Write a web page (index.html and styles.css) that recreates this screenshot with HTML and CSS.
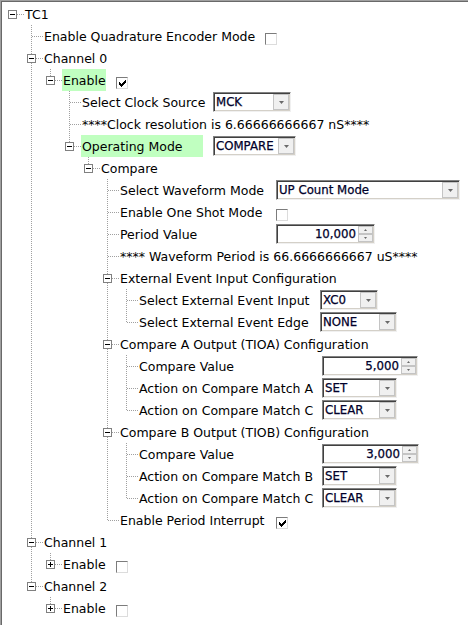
FILE: index.html
```html
<!DOCTYPE html>
<html>
<head>
<meta charset="utf-8">
<link rel="stylesheet" href="styles.css">
</head>
<body>
<div class="tree">
  <div class="row"><span class="o root"><span class="box minus"></span></span><span class="lbl">TC1</span></div>
  <div class="row"><span class="g"></span><span class="o tee"></span><span class="lbl wq">Enable Quadrature Encoder Mode</span><span class="cb"></span></div>
  <div class="row"><span class="g"></span><span class="o tee"><span class="box minus"></span></span><span class="lbl">Channel 0</span></div>
  <div class="row"><span class="g"></span><span class="g v"></span><span class="o elbow"><span class="box minus"></span></span><span class="lbl we hl">Enable</span><span class="cb"><svg class="chk" width="7" height="7" viewBox="0 0 7 7"><path d="M6 0h1v1h-1z M5 1h2v1h-2z M0 2h1v1h-1z M4 2h3v1h-3z M0 3h2v1h-2z M3 3h3v1h-3z M0 4h5v1h-5z M1 5h3v1h-3z M2 6h1v1h-1z"/></svg></span></div>
  <div class="row"><span class="g"></span><span class="g v"></span><span class="g"></span><span class="o tee"></span><span class="lbl w3">Select Clock Source</span><span class="cmb c-mck"><span class="val">MCK</span><span class="btn"><svg width="5" height="3" viewBox="0 0 5 3"><path d="M0 0h5l-2.5 3z"/></svg></span></span></div>
  <div class="row"><span class="g"></span><span class="g v"></span><span class="g"></span><span class="o tee"></span><span class="lbl">****Clock resolution is 6.66666666667 nS****</span></div>
  <div class="row"><span class="g"></span><span class="g v"></span><span class="g"></span><span class="o elbow"><span class="box minus"></span></span><span class="lbl w3 hl">Operating Mode</span><span class="cmb c-cmp"><span class="val">COMPARE</span><span class="btn"><svg width="5" height="3" viewBox="0 0 5 3"><path d="M0 0h5l-2.5 3z"/></svg></span></span></div>
  <div class="row"><span class="g"></span><span class="g v"></span><span class="g"></span><span class="g"></span><span class="o elbow"><span class="box minus"></span></span><span class="lbl">Compare</span></div>
  <div class="row"><span class="g"></span><span class="g v"></span><span class="g"></span><span class="g"></span><span class="g"></span><span class="o tee"></span><span class="lbl w5">Select Waveform Mode</span><span class="cmb c-wave"><span class="val">UP Count Mode</span><span class="btn"><svg width="5" height="3" viewBox="0 0 5 3"><path d="M0 0h5l-2.5 3z"/></svg></span></span></div>
  <div class="row"><span class="g"></span><span class="g v"></span><span class="g"></span><span class="g"></span><span class="g"></span><span class="o tee"></span><span class="lbl w5">Enable One Shot Mode</span><span class="cb"></span></div>
  <div class="row"><span class="g"></span><span class="g v"></span><span class="g"></span><span class="g"></span><span class="g"></span><span class="o tee"></span><span class="lbl w5">Period Value</span><span class="spn s-per"><span class="val">10,000</span><span class="spin"><span><svg width="3" height="2" viewBox="0 0 3 2"><path d="M1.5 0l1.5 2h-3z"/></svg></span><span><svg width="3" height="2" viewBox="0 0 3 2"><path d="M0 0h3l-1.5 2z"/></svg></span></span></span></div>
  <div class="row"><span class="g"></span><span class="g v"></span><span class="g"></span><span class="g"></span><span class="g"></span><span class="o tee"></span><span class="lbl">**** Waveform Period is 66.6666666667 uS****</span></div>
  <div class="row"><span class="g"></span><span class="g v"></span><span class="g"></span><span class="g"></span><span class="g"></span><span class="o tee"><span class="box minus"></span></span><span class="lbl">External Event Input Configuration</span></div>
  <div class="row"><span class="g"></span><span class="g v"></span><span class="g"></span><span class="g"></span><span class="g"></span><span class="g v"></span><span class="o tee"></span><span class="lbl w6a">Select External Event Input</span><span class="cmb c-xc"><span class="val">XC0</span><span class="btn"><svg width="5" height="3" viewBox="0 0 5 3"><path d="M0 0h5l-2.5 3z"/></svg></span></span></div>
  <div class="row"><span class="g"></span><span class="g v"></span><span class="g"></span><span class="g"></span><span class="g"></span><span class="g v"></span><span class="o elbow"></span><span class="lbl w6a">Select External Event Edge</span><span class="cmb c-none"><span class="val">NONE</span><span class="btn"><svg width="5" height="3" viewBox="0 0 5 3"><path d="M0 0h5l-2.5 3z"/></svg></span></span></div>
  <div class="row"><span class="g"></span><span class="g v"></span><span class="g"></span><span class="g"></span><span class="g"></span><span class="o tee"><span class="box minus"></span></span><span class="lbl">Compare A Output (TIOA) Configuration</span></div>
  <div class="row"><span class="g"></span><span class="g v"></span><span class="g"></span><span class="g"></span><span class="g"></span><span class="g v"></span><span class="o tee"></span><span class="lbl w6b">Compare Value</span><span class="spn s-a"><span class="val">5,000</span><span class="spin"><span><svg width="3" height="2" viewBox="0 0 3 2"><path d="M1.5 0l1.5 2h-3z"/></svg></span><span><svg width="3" height="2" viewBox="0 0 3 2"><path d="M0 0h3l-1.5 2z"/></svg></span></span></span></div>
  <div class="row"><span class="g"></span><span class="g v"></span><span class="g"></span><span class="g"></span><span class="g"></span><span class="g v"></span><span class="o tee"></span><span class="lbl w6b">Action on Compare Match A</span><span class="cmb c-act"><span class="val">SET</span><span class="btn"><svg width="5" height="3" viewBox="0 0 5 3"><path d="M0 0h5l-2.5 3z"/></svg></span></span></div>
  <div class="row"><span class="g"></span><span class="g v"></span><span class="g"></span><span class="g"></span><span class="g"></span><span class="g v"></span><span class="o elbow"></span><span class="lbl w6b">Action on Compare Match C</span><span class="cmb c-act"><span class="val">CLEAR</span><span class="btn"><svg width="5" height="3" viewBox="0 0 5 3"><path d="M0 0h5l-2.5 3z"/></svg></span></span></div>
  <div class="row"><span class="g"></span><span class="g v"></span><span class="g"></span><span class="g"></span><span class="g"></span><span class="o tee"><span class="box minus"></span></span><span class="lbl">Compare B Output (TIOB) Configuration</span></div>
  <div class="row"><span class="g"></span><span class="g v"></span><span class="g"></span><span class="g"></span><span class="g"></span><span class="g v"></span><span class="o tee"></span><span class="lbl w6b">Compare Value</span><span class="spn s-b"><span class="val">3,000</span><span class="spin"><span><svg width="3" height="2" viewBox="0 0 3 2"><path d="M1.5 0l1.5 2h-3z"/></svg></span><span><svg width="3" height="2" viewBox="0 0 3 2"><path d="M0 0h3l-1.5 2z"/></svg></span></span></span></div>
  <div class="row"><span class="g"></span><span class="g v"></span><span class="g"></span><span class="g"></span><span class="g"></span><span class="g v"></span><span class="o tee"></span><span class="lbl w6b">Action on Compare Match B</span><span class="cmb c-act"><span class="val">SET</span><span class="btn"><svg width="5" height="3" viewBox="0 0 5 3"><path d="M0 0h5l-2.5 3z"/></svg></span></span></div>
  <div class="row"><span class="g"></span><span class="g v"></span><span class="g"></span><span class="g"></span><span class="g"></span><span class="g v"></span><span class="o elbow"></span><span class="lbl w6b">Action on Compare Match C</span><span class="cmb c-act"><span class="val">CLEAR</span><span class="btn"><svg width="5" height="3" viewBox="0 0 5 3"><path d="M0 0h5l-2.5 3z"/></svg></span></span></div>
  <div class="row"><span class="g"></span><span class="g v"></span><span class="g"></span><span class="g"></span><span class="g"></span><span class="o elbow"></span><span class="lbl w5">Enable Period Interrupt</span><span class="cb"><svg class="chk" width="7" height="7" viewBox="0 0 7 7"><path d="M6 0h1v1h-1z M5 1h2v1h-2z M0 2h1v1h-1z M4 2h3v1h-3z M0 3h2v1h-2z M3 3h3v1h-3z M0 4h5v1h-5z M1 5h3v1h-3z M2 6h1v1h-1z"/></svg></span></div>
  <div class="row"><span class="g"></span><span class="o tee"><span class="box minus"></span></span><span class="lbl">Channel 1</span></div>
  <div class="row"><span class="g"></span><span class="g v"></span><span class="o elbow"><span class="box plus"></span></span><span class="lbl we">Enable</span><span class="cb"></span></div>
  <div class="row"><span class="g"></span><span class="o elbow"><span class="box minus"></span></span><span class="lbl">Channel 2</span></div>
  <div class="row"><span class="g"></span><span class="g"></span><span class="o elbow"><span class="box plus"></span></span><span class="lbl we">Enable</span><span class="cb"></span></div>
</div>
</body>
</html>
```

FILE: styles.css
```css
* { box-sizing: border-box; }
html, body { margin: 0; padding: 0; background: #fff; }
body {
  font-family: "DejaVu Sans", sans-serif;
  font-size: 12.5px;
  color: #000;
}
.tree {
  height: 625px;
  border-top: 1px solid #a0a0a0;
  border-left: 1px solid #a0a0a0;
  box-shadow: inset 1px 1px 0 #696969;
  padding-top: 2px;
  padding-left: 1px;
  overflow: hidden;
}
.row { display: flex; height: 22px; }
.g { flex: none; width: 19px; height: 22px; }
.v {
  background: repeating-linear-gradient(to bottom, #a0a0a0 0 1px, transparent 1px 2px) 10px 0 / 1px 22px no-repeat;
}
.o {
  flex: none;
  width: 22px;
  height: 22px;
  padding: 7px 0 0 6px;
}
.root {
  background: repeating-linear-gradient(to right, #a0a0a0 0 1px, transparent 1px 2px) 11px 11px / 11px 1px no-repeat;
}
.tee {
  background:
    repeating-linear-gradient(to right, #a0a0a0 0 1px, transparent 1px 2px) 11px 11px / 11px 1px no-repeat,
    repeating-linear-gradient(to bottom, #a0a0a0 0 1px, transparent 1px 2px) 10px 0 / 1px 22px no-repeat;
}
.elbow {
  background:
    repeating-linear-gradient(to right, #a0a0a0 0 1px, transparent 1px 2px) 11px 11px / 11px 1px no-repeat,
    repeating-linear-gradient(to bottom, #a0a0a0 0 1px, transparent 1px 2px) 10px 0 / 1px 11px no-repeat;
}
.box {
  display: block;
  width: 9px;
  height: 9px;
  border: 1px solid #808080;
  background: #fff;
}
.minus {
  background: linear-gradient(#000, #000) 1px 3px / 5px 1px no-repeat, #fff;
}
.plus {
  background:
    linear-gradient(#000, #000) 1px 3px / 5px 1px no-repeat,
    linear-gradient(#000, #000) 3px 1px / 1px 5px no-repeat,
    #fff;
}
.lbl {
  flex: none;
  white-space: nowrap;
  height: 22px;
  padding-top: 2px;
  line-height: 20px;
  padding-left: 1px;
}
.hl { background: #c0ffc0; }
.wq { width: 212px; margin-right: 10px; }
.we { width: 44px; margin-right: 10px; }
.w3 { width: 122px; margin-right: 10px; }
.w5 { width: 147px; margin-right: 10px; }
.w6a { width: 172px; margin-right: 10px; }
.w6b { width: 174px; margin-right: 10px; }

.cb {
  flex: none;
  width: 12px;
  height: 12px;
  margin-top: 8px;
  border: 1px solid;
  border-color: #7c7c7c #dcdcdc #dcdcdc #7c7c7c;
  background: #fff;
  display: flex;
  align-items: center;
  justify-content: center;
}
.chk { display: block; fill: #000; shape-rendering: crispEdges; }

.cmb, .spn {
  flex: none;
  display: flex;
  height: 20px;
  margin-top: 1px;
  border: 1px solid;
  border-color: #828282 #f0f0f0 #f0f0f0 #828282;
  box-shadow: inset 1px 1px 0 #404040, inset -1px -1px 0 #d4d0c8;
  background: #fff;
  padding: 1px;
}
.val {
  flex: 1;
  min-width: 0;
  padding-left: 1px;
  line-height: 16px;
  font-size: 11.75px;
  color: #00002a;
  -webkit-text-stroke: 0.25px #00002a;
  white-space: nowrap;
  overflow: hidden;
}
.spn .val { text-align: right; padding-right: 2px; }
.btn {
  flex: none;
  width: 16px;
  height: 16px;
  background: #f0f0f0;
  border: 1px solid #c4c4c4;
  display: flex;
  align-items: center;
  justify-content: center;
}
.btn svg { display: block; fill: #6a6a6a; }
.spin {
  flex: none;
  width: 15px;
  height: 16px;
  display: flex;
  flex-direction: column;
}
.spin > span {
  flex: 1;
  background: #f0f0f0;
  border: 1px solid #c4c4c4;
  display: flex;
  align-items: center;
  justify-content: center;
}
.spin svg { display: block; fill: #6a6a6a; }

.c-mck { width: 78px; }
.c-cmp { width: 83px; }
.c-wave { width: 184px; }
.c-xc { width: 58px; }
.c-none { width: 77px; }
.c-act { width: 75px; }
.s-per { width: 99px; }
.s-a { width: 96px; }
.s-b { width: 97px; }
```
